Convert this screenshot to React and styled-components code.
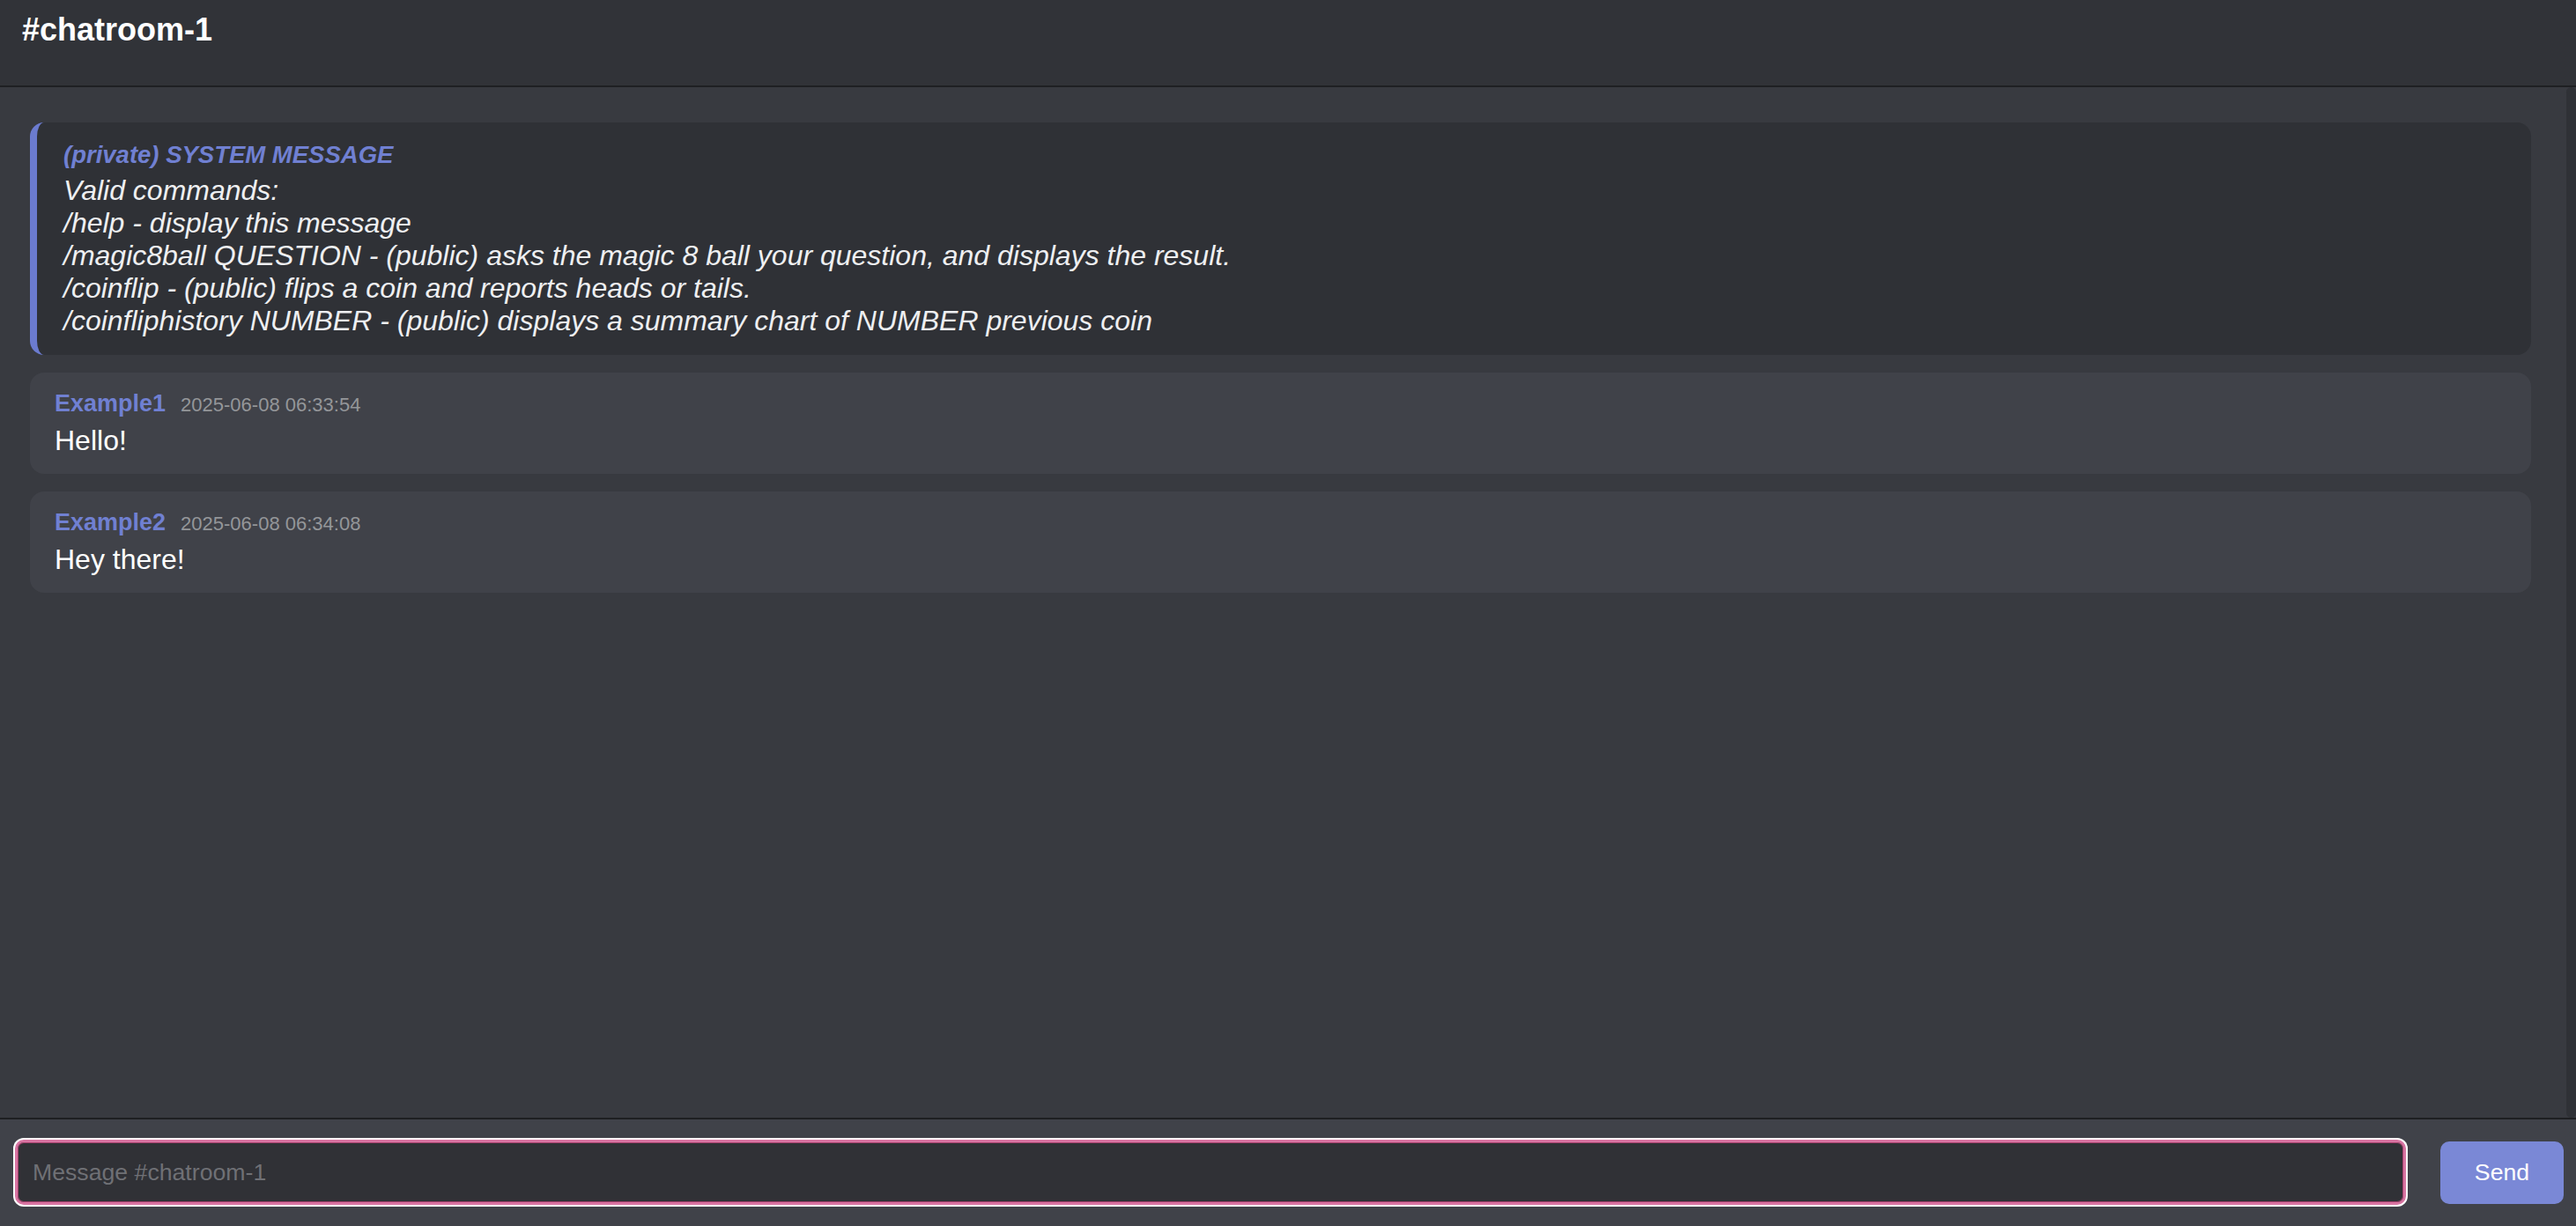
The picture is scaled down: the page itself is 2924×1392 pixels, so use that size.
import React from 'react';
import styled, { createGlobalStyle } from 'styled-components';

const GlobalStyle = createGlobalStyle`
  *, *::before, *::after {
    box-sizing: border-box;
  }

  html, body, #root {
    height: 100%;
  }

  body {
    margin: 0;
    background: #383a40;
    font-family: "Liberation Sans", Arial, Helvetica, sans-serif;
    color: #f2f3f5;
  }
`;

const Shell = styled.div`
  display: flex;
  flex-direction: column;
  height: 100vh;
  overflow: hidden;
`;

const Header = styled.header`
  flex-shrink: 0;
  height: 99px;
  padding: 13px 25px 0;
  background: #313338;
  border-bottom: 2px solid #1f2023;
`;

const RoomName = styled.h1`
  margin: 0;
  font-size: 36px;
  font-weight: 700;
  color: #ffffff;
`;

// message list plus the always-visible scroll rail on the right
const FeedArea = styled.div`
  flex: 1;
  min-height: 0;
  display: flex;
`;

const Feed = styled.main`
  flex: 1;
  display: flex;
  flex-direction: column;
  gap: 20px;
  padding: 40px 40px 20px 34px;
  overflow-y: auto;
`;

const ScrollRail = styled.div`
  flex-shrink: 0;
  width: 11px;
  background: #2f3136;
  border-radius: 6px;
`;

const SystemNote = styled.div`
  flex-shrink: 0;
  padding: 21px 30px 20px;
  background: #2f3136;
  border-left: 8px solid #6b7bcf;
  border-radius: 16px;
  font-size: 32px;
  font-style: italic;
  color: #eeeff1;
`;

const NoteTitle = styled.div`
  margin-bottom: 6px;
  font-size: 27.5px;
  font-weight: 700;
  color: #7080d2;
`;

const Message = styled.div`
  flex-shrink: 0;
  padding: 20px 28px 19px;
  background: #404249;
  border-radius: 16px;
`;

const Meta = styled.div`
  display: flex;
  align-items: baseline;
  gap: 17px;
`;

const Author = styled.span`
  font-size: 27px;
  font-weight: 700;
  color: #7080d2;
`;

const Stamp = styled.span`
  font-size: 22px;
  color: #949699;
`;

const Body = styled.div`
  margin-top: 8px;
  font-size: 32px;
  color: #ffffff;
`;

const Composer = styled.form`
  flex-shrink: 0;
  display: flex;
  align-items: center;
  gap: 39px;
  padding: 23px 14px 24px 17px;
  background: #404249;
  border-top: 2px solid #1e1f22;
`;

const Input = styled.input`
  flex: 1;
  height: 74px;
  padding: 0 17px;
  background: #303136;
  border: 3px solid #d874a2;
  border-radius: 10px;
  box-shadow: 0 0 0 2px #ffffff, inset 0 0 0 1px #a3426d;
  outline: none;
  font-family: inherit;
  font-size: 26.67px;
  color: #f2f3f5;

  &::placeholder {
    color: #6f7075;
  }
`;

const SendButton = styled.button`
  width: 140px;
  height: 71px;
  border: none;
  border-radius: 10px;
  background: #7a88d6;
  font-family: inherit;
  font-size: 26.67px;
  color: #ffffff;
  cursor: pointer;
`;

const commands = [
  'Valid commands:',
  '/help - display this message',
  '/magic8ball QUESTION - (public) asks the magic 8 ball your question, and displays the result.',
  '/coinflip - (public) flips a coin and reports heads or tails.',
  '/coinfliphistory NUMBER - (public) displays a summary chart of NUMBER previous coin',
];

const messages = [
  { id: 1, user: 'Example1', time: '2025-06-08 06:33:54', text: 'Hello!' },
  { id: 2, user: 'Example2', time: '2025-06-08 06:34:08', text: 'Hey there!' },
];

const App = () => {
  return (
    <Shell>
      <GlobalStyle />
      <Header>
        <RoomName>#chatroom-1</RoomName>
      </Header>

      <FeedArea>
        <Feed>
          <SystemNote>
            <NoteTitle>(private) SYSTEM MESSAGE</NoteTitle>
            {commands.map((line) => (
              <div key={line}>{line}</div>
            ))}
          </SystemNote>

          {messages.map((m) => (
            <Message key={m.id}>
              <Meta>
                <Author>{m.user}</Author>
                <Stamp>{m.time}</Stamp>
              </Meta>
              <Body>{m.text}</Body>
            </Message>
          ))}
        </Feed>
        <ScrollRail />
      </FeedArea>

      <Composer onSubmit={(e) => e.preventDefault()}>
        <Input placeholder="Message #chatroom-1" />
        <SendButton type="submit">Send</SendButton>
      </Composer>
    </Shell>
  );
};

export default App;
